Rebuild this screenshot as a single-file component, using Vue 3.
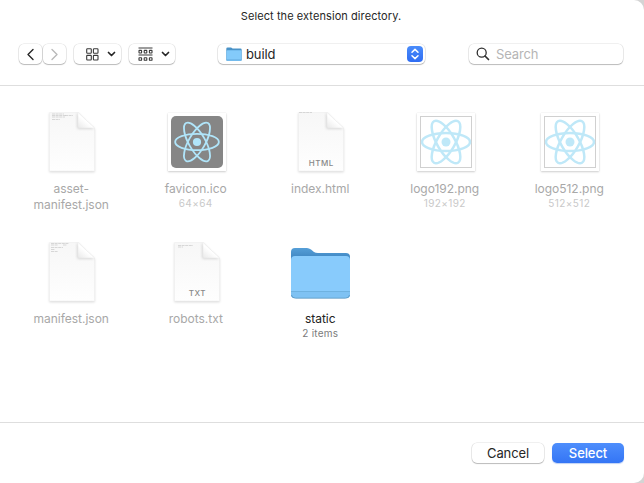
<script setup>
const files = [
  { name: ['asset-', 'manifest.json'], kind: 'doc', preview: 'asset' },
  { name: ['favicon.ico'], kind: 'image', sub: '64×64', dark: true },
  { name: ['index.html'], kind: 'doc', tag: 'HTML', preview: 'html' },
  { name: ['logo192.png'], kind: 'image', sub: '192×192' },
  { name: ['logo512.png'], kind: 'image', sub: '512×512' },
  { name: ['manifest.json'], kind: 'doc', preview: 'manifest' },
  { name: ['robots.txt'], kind: 'doc', tag: 'TXT', preview: 'robots' },
  { name: ['static'], kind: 'folder', sub: '2 items' },
]
const previews = {
  asset: 'M3 2h12M3 3.5h14M3 5h13M3 7.5h8M16 3.5h8',
  html: 'M1 .5h13',
  manifest: 'M2 1.5h18M2 3h7M2 5.5h12M2 7.5h4M2 9.5h7M14 3h4',
  robots: 'M4 3.5h15M4 5h5',
}
</script>

<template>
  <div class="dialog">
    <header class="header">
      <h1 class="title">Select the extension directory.</h1>
      <div class="toolbar">
        <div class="nav">
          <button class="control arrow">
            <svg width="9" height="13" viewBox="0 0 9 13"><path d="M7 1.500 2 6.500l5 5" /></svg>
          </button>
          <button class="control arrow off">
            <svg width="9" height="13" viewBox="0 0 9 13"><path d="M2 1.500 7 6.500l-5 5" /></svg>
          </button>
        </div>
        <button class="control view">
          <svg class="glyph" width="13" height="13" viewBox="0 0 13 13">
            <rect x=".7" y=".7" width="4.6" height="4.6" rx=".7" /><rect x="7.4" y=".7" width="4.6" height="4.6" rx=".7" />
            <rect x=".7" y="7.4" width="4.6" height="4.6" rx=".7" /><rect x="7.4" y="7.4" width="4.6" height="4.6" rx=".7" />
          </svg>
          <svg class="caret" width="9" height="6" viewBox="0 0 9 6"><path d="m1.500 1.500 3 3 3-3" /></svg>
        </button>
        <button class="control group">
          <svg class="glyph" width="15" height="15" viewBox="0 0 15 15">
            <path d="M.5 1h14M.5 8h14" />
            <rect x="1" y="3.4" width="2.6" height="2.6" rx=".4" /><rect x="6.2" y="3.4" width="2.6" height="2.6" rx=".4" /><rect x="11.4" y="3.4" width="2.6" height="2.6" rx=".4" />
            <rect x="1" y="10.7" width="2.6" height="2.6" rx=".4" /><rect x="6.2" y="10.7" width="2.6" height="2.6" rx=".4" /><rect x="11.4" y="10.7" width="2.6" height="2.6" rx=".4" />
          </svg>
          <svg class="caret" width="9" height="6" viewBox="0 0 9 6"><path d="m1.500 1.500 3 3 3-3" /></svg>
        </button>
        <button class="control location">
          <svg width="16" height="15" viewBox="0 0 16 15">
            <path d="M.3 1.8Q.3.5 1.6.5h3.5l1.5 1h7.8q1.3 0 1.3 1.3v10q0 1.3-1.3 1.3H1.6Q.3 14.1.3 12.8z" fill="#4a93c8" />
            <rect x=".5" y="3.3" width="15" height="10.4" rx="1" fill="#83cafa" />
            <path d="M.5 12.6h15" stroke="#6cb2e3" stroke-width=".8" />
          </svg>
          <span>build</span>
          <i class="stepper">
            <svg width="16" height="16" viewBox="0 0 16 16"><path d="m5 6.300 3-2.900 3 2.900M5 9.700l3 2.900 3-2.900" /></svg>
          </i>
        </button>
        <div class="control search">
          <svg width="14" height="14" viewBox="0 0 14 14"><circle cx="5.7" cy="5.7" r="4.5" /><path d="m9 9 3.500 3.500" /></svg>
          <span>Search</span>
        </div>
      </div>
    </header>

    <main class="files">
      <div v-for="file in files" :key="file.name.join('')" class="file" :class="{ active: file.kind === 'folder' }">
        <div class="icon">
          <svg v-if="file.kind === 'doc'" class="doc" width="52" height="64" viewBox="-3 0 52 64">
            <defs>
              <linearGradient id="paper" x1="0" y1="0" x2="0" y2="1"><stop offset="0" stop-color="#f7f7f7" /><stop offset="1" stop-color="#fefefe" /></linearGradient>
              <linearGradient id="fold" x1="0" y1="1" x2=".7" y2=".2"><stop offset="0" stop-color="#e9e9e9" /><stop offset=".6" stop-color="#fff" /></linearGradient>
            </defs>
            <path class="sheet" d="M.5.5h28.500L45.500 16v43H.5z" fill="url(#paper)" />
            <path class="flap" d="M29 .5 45.500 16H31q-2 0-2-2z" fill="url(#fold)" />
            <path class="lines" :d="previews[file.preview]" />
            <text v-if="file.tag" x="23.300" y="53.500" text-anchor="middle">{{ file.tag }}</text>
          </svg>
          <div v-else-if="file.kind === 'image'" class="frame">
            <div class="picture" :class="{ dark: file.dark }">
              <svg width="52" height="52" viewBox="-26 -26 52 52" :stroke-width="file.dark ? 2 : 2.5">
                <g :transform="file.dark ? 'scale(.91)' : ''">
                  <ellipse rx="24" ry="9" />
                  <ellipse rx="24" ry="9" transform="rotate(60)" />
                  <ellipse rx="24" ry="9" transform="rotate(120)" />
                  <circle r="4.500" />
                </g>
              </svg>
            </div>
          </div>
          <svg v-else class="folder" width="62" height="54" viewBox="0 0 62 54">
            <defs>
              <linearGradient id="back" x1="0" y1="0" x2="0" y2=".25"><stop offset="0" stop-color="#559fd8" /><stop offset="1" stop-color="#3b81bd" /></linearGradient>
            </defs>
            <path d="M1 5q0-4 4-4h12q2 0 4 1.500l3 2.500q1.500 1 4 1h28q4 0 4 4v37q0 4-4 4H5q-4 0-4-4z" fill="url(#back)" />
            <path d="M1 13q0-4 4-4h51q4 0 4 4v34q0 4-4 4H5q-4 0-4-4z" fill="#88cbfc" />
            <path d="M1 44.500h59V47q0 4-4 4H5q-4 0-4-4z" fill="#7fc2f3" />
            <path d="M1 44.500h59" stroke="#69add9" stroke-width=".8" />
            <path d="M1.500 48q.5 3.200 4 3.200h50q3.500 0 4-3.200" stroke="#5c9ac5" fill="none" stroke-width=".9" />
          </svg>
        </div>
        <div class="name"><span v-for="line in file.name" :key="line">{{ line }}</span></div>
        <div v-if="file.sub" class="sub">{{ file.sub }}</div>
      </div>
    </main>

    <footer class="footer">
      <button class="control cancel">Cancel</button>
      <button class="select">Select</button>
    </footer>
  </div>
</template>

<style>
body { background: #d4d4d4; }
</style>

<style scoped>
.dialog {
  width: 644px;
  height: 483px;
  box-sizing: border-box;
  display: flex;
  flex-direction: column;
  overflow: hidden;
  background: #fff;
  border-radius: 0 10px 10px 0;
  font-family: Inter, sans-serif;
  color: #262626;
}
button { font: inherit; color: inherit; border: 0; padding: 0; }
svg { display: block; flex: none; }
.header { height: 86px; box-sizing: border-box; border-bottom: 1px solid #dedede; flex: none; }
.title { margin: 0; padding: 8px 2px 0 0; height: 35px; box-sizing: border-box; font-size: 11px; line-height: 16px; font-weight: 400; letter-spacing: .08px; text-align: center; }
.toolbar { display: flex; padding: 9px 21px 0 19px; height: 30px; box-sizing: border-box; }
.control {
  box-sizing: border-box;
  height: 20px;
  display: flex;
  align-items: center;
  background: #fff;
  border-radius: 5px;
  box-shadow: 0 0 0 .6px rgba(0, 0, 0, .12), 0 1px 1px rgba(0, 0, 0, .22);
}
.nav { display: flex; gap: 1px; margin-right: 8px; }
.arrow { width: 23px; justify-content: center; }
.arrow path { fill: none; stroke: #262626; stroke-width: 1.4; stroke-linecap: round; stroke-linejoin: round; }
.off path { stroke: #b9b9b9; }
.view { width: 47px; padding-left: 12px; gap: 8px; margin-right: 8px; }
.group { width: 46px; padding-left: 9px; gap: 7.5px; margin-right: 43px; }
.glyph { fill: none; stroke: #3a3a3a; stroke-width: 1.1; }
.caret path { fill: none; stroke: #262626; stroke-width: 1.7; stroke-linecap: round; stroke-linejoin: round; }
.location { width: 207px; padding: 0 2px 0 8px; gap: 4px; font-size: 13px; letter-spacing: -.1px; margin-right: 44px; }
.location span { padding-bottom: 1px; }
.stepper { width: 16px; height: 16px; border-radius: 4px; margin-left: auto; background: linear-gradient(#4a8cfb, #2f6df3); }
.stepper path { fill: none; stroke: #fff; stroke-width: 1.5; stroke-linecap: round; stroke-linejoin: round; }
.search { flex: 1; padding-left: 7px; gap: 6px; font-size: 13px; letter-spacing: -.15px; color: #b5b5b5; }
.search svg { fill: none; stroke: #303030; stroke-width: 1.3; stroke-linecap: round; }
.search path { stroke-width: 1.7; }

.files {
  flex: 1;
  display: grid;
  grid-template-columns: repeat(5, 124.5px);
  grid-auto-rows: 130px;
  align-content: start;
  padding: 26px 0 0 9px;
}
.file { display: flex; flex-direction: column; align-items: center; color: #a8a8a8; }
.icon { height: 69px; padding-left: 2px; display: flex; justify-content: center; flex: none; }
.sheet { stroke: #efefef; stroke-width: .5; filter: drop-shadow(0 1px 1px rgba(0, 0, 0, .15)); }
.flap { stroke: #e6e6e6; stroke-width: .4; filter: drop-shadow(-1px 1px 1px rgba(0, 0, 0, .12)); }
.lines { stroke: #c8c8c8; stroke-width: .7; stroke-dasharray: 3 .6; }
.doc text { font: 500 8px Inter, sans-serif; letter-spacing: .5px; fill: #888; }
.frame {
  width: 58px;
  height: 58px;
  box-sizing: border-box;
  margin-top: 1px;
  padding: 3px;
  background: #fff;
  box-shadow: 0 0 1px rgba(0, 0, 0, .12), 0 1px 2px rgba(0, 0, 0, .18);
}
.picture { width: 52px; height: 52px; box-shadow: inset 0 0 0 1px #d0d0d0; }
.picture svg { fill: none; stroke: #bfe8f8; }
.picture circle { fill: #bfe8f8; stroke: none; }
.picture.dark { background: #868686; border-radius: 5px; box-shadow: none; }
.dark svg { stroke: #b0e5fa; }
.dark circle { fill: #b0e5fa; }
.folder { margin-top: 5px; }
.name { display: flex; flex-direction: column; align-items: center; font-size: 12px; line-height: 16px; letter-spacing: -.02px; }
.sub { font-size: 10px; line-height: 12px; letter-spacing: .4px; color: #c9c9c9; }
.active { color: #222; }
.active .sub { color: #7b7b7b; letter-spacing: .2px; }

.footer { height: 61px; box-sizing: border-box; border-top: 1px solid #dedede; display: flex; justify-content: flex-end; gap: 8px; padding: 20px 20px 0 0; font-size: 13px; flex: none; }
.cancel { width: 72px; padding-bottom: 1px; justify-content: center; letter-spacing: -.1px; }
.select { width: 72px; height: 20px; padding-bottom: 1px; border-radius: 5px; background: linear-gradient(#4e8efc, #3475f5); color: #fff; box-shadow: 0 1px 1px rgba(40, 100, 220, .3); font-weight: 500; letter-spacing: -.1px; }
</style>
